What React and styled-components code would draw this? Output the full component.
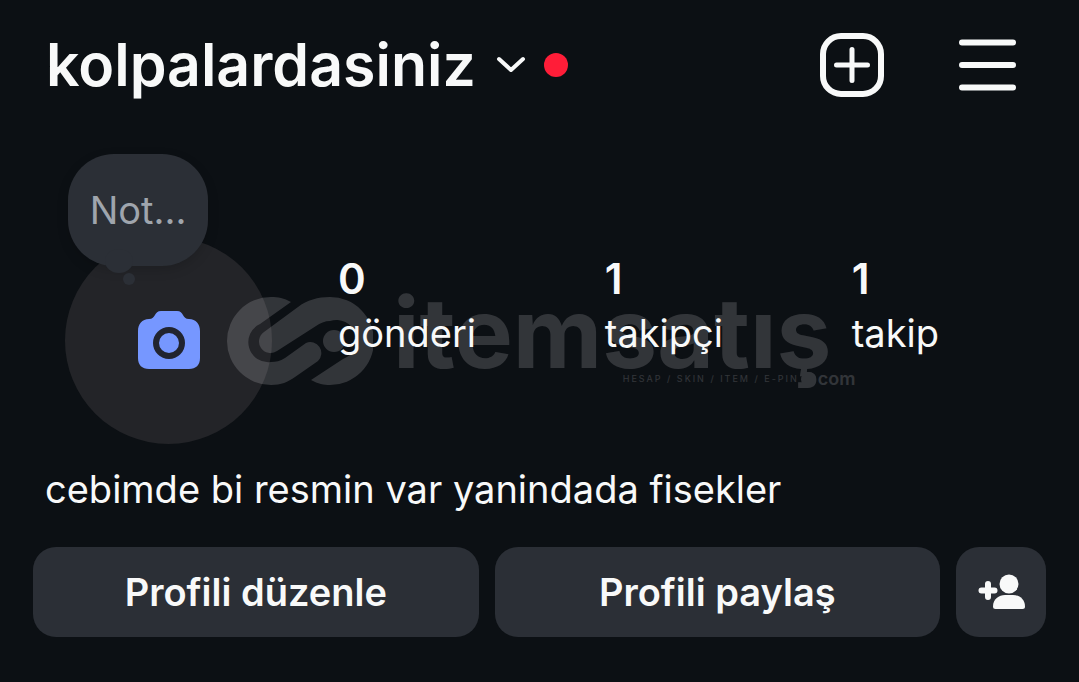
import * as React from 'react';
import styled, { createGlobalStyle } from 'styled-components';

const GlobalStyle = createGlobalStyle`
    * {
        box-sizing: border-box;
    }
    body {
        margin: 0;
        background: #0c1014;
        color: #f8f9f9;
        font-family: Inter, Roboto, sans-serif;
    }
`;

const stats = [
    { label: 'gönderi', value: 0 },
    { label: 'takipçi', value: 1 },
    { label: 'takip', value: 1 },
];

const Watermark = () => (
    <StyledWatermark aria-hidden="true">
        <svg width="146" height="90" viewBox="0 0 146 90">
            <path d="M64 6 C57 2 51 1 44 1 A44 44 0 0 0 44 89 C54 89 61 86 68 81 L91 65 A11 11 0 0 0 79 47 L58 62 C53 65 49 66 44 66 A20 20 0 0 1 33 28 Z" />
            <path d="M37 36 L71 11 C80 4 91 1 103 1 A44 44 0 0 1 103 89 C97 89 91 88 84 84 L116 63 A19 19 0 0 0 103 25 C98 25 93 27 89 30 L50 55 A11 11 0 0 1 37 36 Z" />
            <circle cx="107" cy="45" r="11" />
        </svg>
        <div className="words">
            <strong>itemsatış</strong>
            <div className="tagline">
                <span>HESAP / SKIN / ITEM / E-PIN</span>
                <i />
                <b>com</b>
            </div>
        </div>
    </StyledWatermark>
);

const App = () => (
    <>
        <GlobalStyle />
        <Page>
            <Header>
                <AccountButton type="button">
                    <h1>kolpalardasiniz</h1>
                    <svg width="30" height="18" viewBox="0 0 30 18">
                        <path d="M3 3 L15 14 L27 3" />
                    </svg>
                    <span className="dot" />
                </AccountButton>
                <HeaderActions>
                    <IconButton type="button" aria-label="Oluştur">
                        <svg width="64" height="64" viewBox="0 0 64 64">
                            <rect x="3" y="3" width="58" height="58" rx="18" />
                            <path className="thin" d="M32 16.500V47.500M16.500 32H47.500" />
                        </svg>
                    </IconButton>
                    <IconButton type="button" aria-label="Menü">
                        <svg width="58" height="64" viewBox="0 0 58 64">
                            <path d="M3 9.500H54M3 32H54M3 54.500H54" />
                        </svg>
                    </IconButton>
                </HeaderActions>
            </Header>
            <Summary>
                <Watermark />
                <AvatarArea>
                    <Avatar type="button" aria-label="Profil fotoğrafı ekle">
                        <svg width="64" height="60" viewBox="0 0 64 60">
                            <path d="M24 0H40C47 0 45 8 52 8C59 8 63 13 63 20V47C63 54 59 58 52 58H12C5 58 1 54 1 47V20C1 13 5 8 12 8C19 8 17 0 24 0Z" />
                            <circle cx="32" cy="32" r="13" />
                        </svg>
                    </Avatar>
                    <Note type="button">Not...</Note>
                </AvatarArea>
                <Stats>
                    {stats.map((item) => (
                        <li key={item.label}>
                            <strong>{item.value}</strong>
                            <span>{item.label}</span>
                        </li>
                    ))}
                </Stats>
            </Summary>
            <Bio>cebimde bi resmin var yanindada fisekler</Bio>
            <Actions>
                <ActionButton type="button">Profili düzenle</ActionButton>
                <ActionButton type="button">Profili paylaş</ActionButton>
                <ActionButton type="button" $square aria-label="Kişileri keşfet">
                    <svg width="48" height="38" viewBox="0 0 48 38">
                        <circle cx="32" cy="11" r="9.500" />
                        <path d="M16 33.500C16 26 22 22 28 22H36C42 22 48 26 48 33.500Q48 36 45.500 36H18.500Q16 36 16 33.500Z" />
                        <path className="plus" d="M11 11V24M4.500 17.500H17.500" />
                    </svg>
                </ActionButton>
            </Actions>
        </Page>
    </>
);

const Page = styled.main`
    padding: 0 33px 45px;
`;

const Header = styled.header`
    display: flex;
    justify-content: space-between;
    align-items: center;
    height: 130px;
    padding: 0 29px 0 13px;
`;

const AccountButton = styled.button`
    display: flex;
    align-items: center;
    padding: 0;
    border: 0;
    background: none;
    color: inherit;
    font-family: inherit;
    cursor: pointer;
    h1 {
        margin: 0;
        font-size: 59px;
        font-weight: 600;
        line-height: 72px;
    }
    svg {
        margin: 0 18px 0 20px;
        fill: none;
        stroke: currentColor;
        stroke-width: 4;
        stroke-linecap: round;
        stroke-linejoin: round;
    }
    .dot {
        width: 24px;
        height: 24px;
        border-radius: 50%;
        background: #ff1d38;
    }
`;

const HeaderActions = styled.div`
    display: flex;
    gap: 75px;
`;

const IconButton = styled.button`
    display: flex;
    padding: 0;
    border: 0;
    background: none;
    color: inherit;
    cursor: pointer;
    svg {
        fill: none;
        stroke: currentColor;
        stroke-width: 6;
        stroke-linecap: round;
    }
    .thin {
        stroke-width: 5;
    }
`;

const Summary = styled.section`
    position: relative;
    display: flex;
    gap: 66px;
    padding: 24px 107px 0 32px;
`;

const AvatarArea = styled.div`
    position: relative;
    flex: none;
    padding-top: 83px;
`;

const Avatar = styled.button`
    display: flex;
    align-items: center;
    justify-content: center;
    width: 207px;
    height: 207px;
    border: 0;
    border-radius: 50%;
    background: #232428;
    cursor: pointer;
    svg {
        fill: #7697ff;
    }
    circle {
        stroke: #212430;
        stroke-width: 6;
    }
`;

const Note = styled.button`
    position: absolute;
    top: 0;
    left: 3px;
    width: 140px;
    height: 112px;
    padding: 0;
    border: 0;
    border-radius: 46px;
    background: #2b2f36;
    box-shadow: 0 4px 12px rgba(0, 0, 0, .15);
    color: #9fa5ad;
    font-family: inherit;
    font-size: 38px;
    cursor: pointer;
    &::before, &::after {
        content: '';
        position: absolute;
        border-radius: 50%;
        background: #2b2f36;
    }
    &::before {
        left: 37px;
        bottom: -7px;
        width: 28px;
        height: 24px;
    }
    &::after {
        left: 55px;
        bottom: -19px;
        width: 12px;
        height: 12px;
    }
`;

const Stats = styled.ul`
    position: relative;
    z-index: 2;
    display: flex;
    flex: 1;
    justify-content: space-between;
    margin: 0;
    padding: 98px 0 0;
    list-style: none;
    li {
        display: flex;
        flex-direction: column;
    }
    strong {
        font-size: 42px;
        font-weight: 600;
        line-height: 54px;
    }
    span {
        font-size: 38px;
        line-height: 54px;
    }
`;

const StyledWatermark = styled.div`
    position: absolute;
    z-index: 1;
    top: 165px;
    left: 194px;
    display: flex;
    opacity: .17;
    color: #eeeaf0;
    pointer-events: none;
    svg {
        margin-top: 1px;
        fill: currentColor;
    }
    .words {
        margin-left: 20px;
    }
    strong {
        display: block;
        font-size: 98px;
        font-weight: 700;
        line-height: 76px;
    }
    .tagline {
        display: flex;
        align-items: center;
        justify-content: flex-end;
        margin-right: -24px;
        font-size: 9px;
        line-height: 16px;
    }
    .tagline span {
        letter-spacing: 2px;
    }
    .tagline i {
        width: 15px;
        height: 15px;
        margin: 0 2px;
        border-radius: 50%;
        background: currentColor;
    }
    .tagline b {
        font-size: 18px;
        font-weight: 600;
    }
`;

const Bio = styled.p`
    margin: 20px 12px 33px;
    font-size: 38px;
    line-height: 50px;
`;

const Actions = styled.div`
    display: flex;
    gap: 16px;
`;

const ActionButton = styled.button`
    display: flex;
    flex: ${(props) => (props.$square ? '0 0 90px' : '1')};
    align-items: center;
    justify-content: center;
    height: 90px;
    padding: 0;
    border: 0;
    border-radius: 23px;
    background: #2b2f36;
    color: inherit;
    font-family: inherit;
    font-size: 38px;
    font-weight: 600;
    cursor: pointer;
    svg {
        fill: currentColor;
    }
    .plus {
        stroke: currentColor;
        stroke-width: 6;
        stroke-linecap: round;
    }
`;

export default App;
